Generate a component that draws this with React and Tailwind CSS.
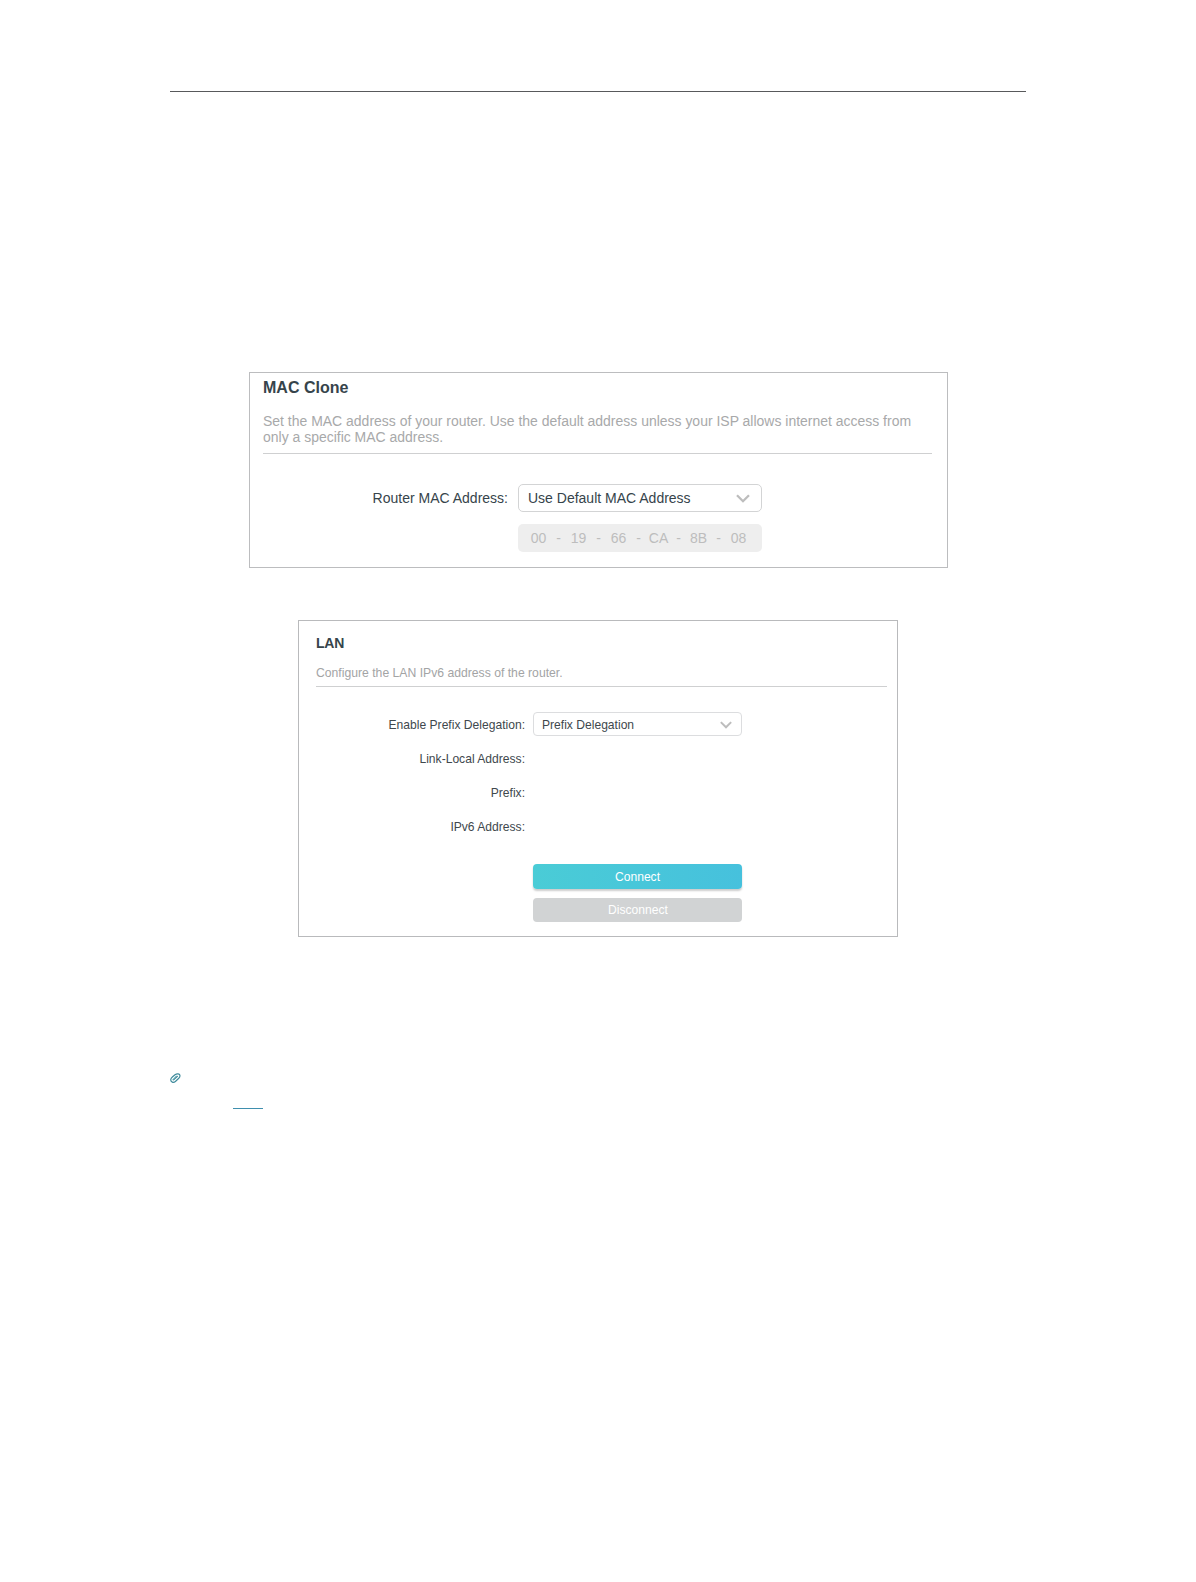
function Chevron({ className }) {
  return (
    <svg viewBox="0 0 14 9" className={className} fill="none" stroke="#bdbdbd" strokeWidth="2.3">
      <path d="M1 1.2 L7 7.2 L13 1.2" />
    </svg>
  );
}

function Paperclip() {
  return (
    <svg viewBox="0 0 11 10" className="block h-[10px] w-[11px]" fill="none" stroke="#3f8b9c" strokeWidth="1.2" strokeLinecap="round">
      <path d="M3.6 6.8 L7.4 3.3" />
      <path d="M8.8 5.2 L5.4 8.5 C3.4 10 .6 9.2 .7 6.7 C.8 5.5 1.6 4.7 2.6 3.8 L5 1.7 C6.8 .4 10.1 .5 10 2.8 C10 3.7 9.5 4.6 8.8 5.2" />
      <path d="M2.4 7 L6 3" stroke="#6db7c0" strokeWidth="0.8" />
    </svg>
  );
}

const macParts = ["00", "-", "19", "-", "66", "-", "CA", "-", "8B", "-", "08"];

function MacClone() {
  return (
    <section className="ml-[79px] mt-[280px] h-[196px] w-[699px] border border-[#bcbdbf] pl-[13px] pr-[15px]">
      <h2 className="mt-[5px] text-[16px] leading-[20px] font-bold text-[#36444b]">MAC Clone</h2>
      <p className="mt-[15px] h-[41px] border-b border-[#cfd0d1] text-[13.98px] leading-4 whitespace-nowrap text-[#a8a9aa]">
        Set the MAC address of your router. Use the default address unless your ISP allows internet access from
        <br />
        only a specific MAC address.
      </p>
      <div className="mt-[30px] flex items-center">
        <span className="w-[245px] text-right text-[14px] leading-5 text-[#36444b]">Router MAC Address:</span>
        <div className="ml-[10px] flex h-7 w-[244px] items-center justify-between rounded-[5px] border border-[#d3d4d5] pr-[11px] pl-[9px] text-[14px] text-[#36444b]">
          Use Default MAC Address
          <Chevron className="h-[9px] w-[14px]" />
        </div>
      </div>
      <div className="mt-3 ml-[255px] flex h-7 w-[244px] items-center rounded-[5px] bg-[#eeeeee] pl-[10.5px] text-[14px] text-[#bdbdbd]">
        {macParts.map((part, i) => (
          <span key={i} className="w-5 text-center">{part}</span>
        ))}
      </div>
    </section>
  );
}

function Row({ label, children }) {
  return (
    <div className="flex h-[34px] items-center">
      <span className="w-[209px] pt-[2px] text-right">{label}</span>
      {children}
    </div>
  );
}

function Lan() {
  return (
    <section className="mt-[52px] ml-32 h-[317px] w-[600px] border border-[#b9babc] pr-[10px] pl-[17px] text-[12.1px] text-[#40484d]">
      <h2 className="mt-[12px] text-[14px] leading-5 font-bold tracking-[-0.2px] text-[#36444b]">LAN</h2>
      <p className="mt-[12px] h-[22px] border-b border-[#cfd0d1] text-[12.2px] leading-4 text-[#a3a4a5]">
        Configure the LAN IPv6 address of the router.
      </p>
      <div className="mt-5">
        <Row label="Enable Prefix Delegation:">
          <div className="ml-2 flex h-6 w-[209px] items-center justify-between rounded-[4px] border border-[#dcdddf] pt-[2px] pr-[9px] pl-2">
            Prefix Delegation
            <Chevron className="h-[8px] w-[12px]" />
          </div>
        </Row>
        <Row label="Link-Local Address:" />
        <Row label="Prefix:" />
        <Row label="IPv6 Address:" />
      </div>
      <div className="mt-[21px] ml-[217px] w-[209px] text-center text-white">
        <button className="block h-[25px] w-full rounded-[4px] bg-linear-to-r from-[#4accd6] to-[#46c1dd] leading-[26px] shadow-[0_2px_2px_rgba(0,0,0,0.2)]">Connect</button>
        <button className="mt-[9px] block h-6 w-full rounded-[4px] bg-[#d1d3d4] pl-px leading-6">Disconnect</button>
      </div>
    </section>
  );
}

export default function App() {
  return (
    <main className="flex min-h-[1582px] w-[1196px] flex-col bg-white pt-[91px] pl-[170px] font-['Liberation_Sans',Arial,sans-serif]">
      <div className="h-px w-[856px] bg-[#58595b]" />
      <MacClone />
      <Lan />
      <div className="mt-[136px]">
        <Paperclip />
      </div>
      <div className="mt-[25px] ml-[63px] h-px w-[30px] bg-[#3f8fae]" />
    </main>
  );
}
